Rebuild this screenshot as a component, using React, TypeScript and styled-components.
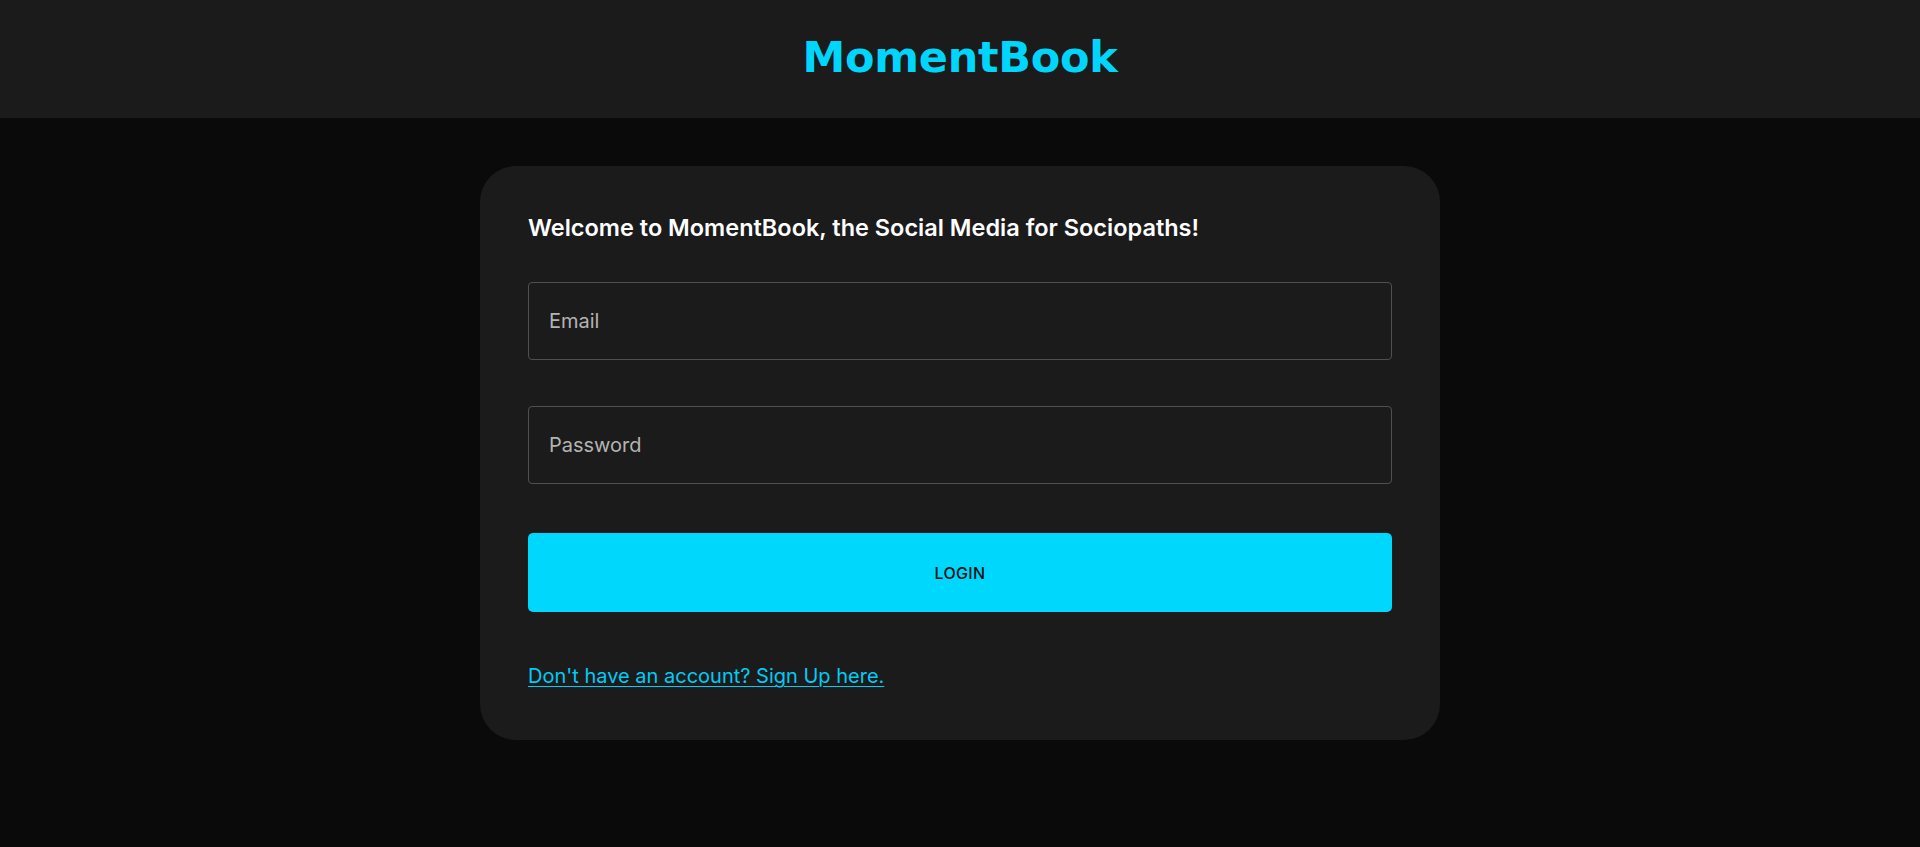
import React from "react";
import styled, { createGlobalStyle } from "styled-components";

const GlobalStyle = createGlobalStyle`
  html, body {
    margin: 0;
    padding: 0;
    background: #0a0a0a;
    font-family: Inter, "Noto Sans", "Liberation Sans", sans-serif;
  }
  * { box-sizing: border-box; }
`;

const Page = styled.div`
  min-height: 847px;
  background: #0a0a0a;
  display: flex;
  flex-direction: column;
`;

const Header = styled.header`
  height: 118px;
  background: #1b1b1b;
  display: flex;
  align-items: center;
  justify-content: center;
`;

const Brand = styled.h1`
  margin: 0;
  font-family: "DejaVu Sans", Verdana, sans-serif;
  font-weight: 700;
  font-size: 43px;
  letter-spacing: -0.3px;
  color: #00d5fb;
  line-height: 1;
  padding-bottom: 4px;
`;

const Main = styled.main`
  display: flex;
  justify-content: center;
  padding-top: 48px;
`;

const Card = styled.form`
  width: 960px;
  background: #1b1b1b;
  border-radius: 36px;
  padding: 48px 48px 52px;
  display: flex;
  flex-direction: column;
`;

const Title = styled.h2`
  margin: 0 0 41px;
  font-size: 23.5px;
  font-weight: 600;
  line-height: 27px;
  color: #ffffff;
`;

const Field = styled.input<{ $gap: number }>`
  height: 78px;
  width: 100%;
  background: #1b1b1b;
  border: 1px solid #505050;
  border-radius: 4px;
  padding: 0 20px;
  margin-bottom: ${(p) => p.$gap}px;
  font-family: inherit;
  font-size: 20px;
  color: #e0e0e0;
  outline: none;
  &::placeholder {
    color: #b3b3b3;
  }
`;

const LoginButton = styled.button`
  height: 79px;
  width: 100%;
  border: none;
  border-radius: 5px;
  background: #00d7fd;
  color: #111111;
  font-family: inherit;
  font-size: 16px;
  font-weight: 500;
  letter-spacing: 0.3px;
  cursor: pointer;
  margin-bottom: 52px;
`;

const SignUpLink = styled.a`
  align-self: flex-start;
  font-size: 20px;
  line-height: 24px;
  color: #00ccf5;
  text-decoration: underline;
  text-underline-offset: 3px;
  text-decoration-thickness: 1px;
`;

export default function App() {
  return (
    <>
      <GlobalStyle />
      <Page>
        <Header>
          <Brand>MomentBook</Brand>
        </Header>
        <Main>
          <Card onSubmit={(e) => e.preventDefault()}>
            <Title>Welcome to MomentBook, the Social Media for Sociopaths!</Title>
            <Field $gap={46} type="email" placeholder="Email" />
            <Field $gap={49} type="password" placeholder="Password" />
            <LoginButton type="submit">LOGIN</LoginButton>
            <SignUpLink href="#">Don't have an account? Sign Up here.</SignUpLink>
          </Card>
        </Main>
      </Page>
    </>
  );
}
